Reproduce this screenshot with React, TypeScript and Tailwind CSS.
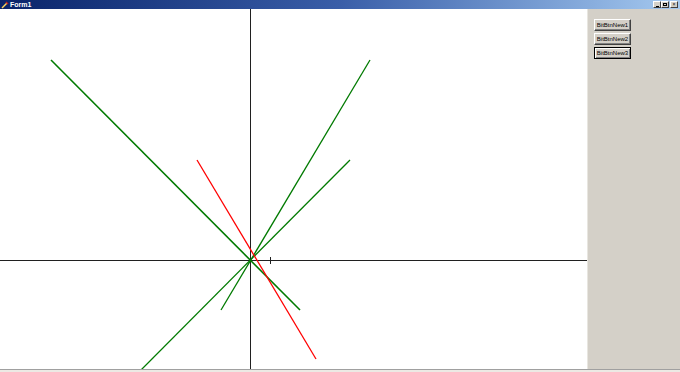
import React from "react";

function Btn({ label, def }: { label: string; def?: boolean }) {
  return (
    <div
      className={
        "w-[37px] h-[12px] flex items-center justify-center bg-[#d4d0c8] text-[6px] leading-none text-black " +
        (def
          ? "border border-black shadow-[inset_1px_1px_0_#fff,inset_-1px_-1px_0_#808080]"
          : "border-t border-l border-t-white border-l-white border-r border-b border-r-[#404040] border-b-[#404040] shadow-[inset_-1px_-1px_0_#808080]")
      }
      style={{ fontFamily: '"Liberation Sans", Arial, sans-serif' }}
    >
      {label}
    </div>
  );
}

function CapBtn({ children }: { children: React.ReactNode }) {
  return (
    <div className="w-[8px] h-[7px] bg-[#d4d0c8] border-t border-l border-white border-r border-b border-r-[#404040] border-b-[#404040] flex items-center justify-center text-[5px] leading-none text-black">
      {children}
    </div>
  );
}

export default function App() {
  return (
    <div
      className="w-[680px] h-[372px] bg-white overflow-hidden flex flex-col"
      style={{ fontFamily: '"Liberation Sans", Arial, sans-serif' }}
    >
      <div className="h-[9px] flex items-center justify-between bg-gradient-to-r from-[#0a246a] via-[#3a5ea8] to-[#a6caf0] shrink-0">
        <div className="flex items-center gap-[1px] pl-[1px]">
          <svg width="8" height="8" viewBox="0 0 8 8">
            <path d="M1 7 L6 2" stroke="#ffd75a" strokeWidth="1.5" />
            <path d="M5 1 L7 3" stroke="#c02020" strokeWidth="1.5" />
          </svg>
          <span className="text-[7px] font-bold text-white leading-none">Form1</span>
        </div>
        <div className="flex gap-[0px] pr-[2px]">
          <CapBtn>
            <span className="block w-[3px] h-[1px] bg-black mt-[3px]" />
          </CapBtn>
          <CapBtn>
            <span className="block w-[4px] h-[3px] border border-black" />
          </CapBtn>
          <div className="ml-[1px]">
            <CapBtn>×</CapBtn>
          </div>
        </div>
      </div>
      <div className="flex h-[360px] shrink-0">
        <div className="w-[587px] h-full bg-white">
          <svg width="587" height="360" viewBox="0 9 587 360">
            <line x1="0" y1="260.5" x2="587" y2="260.5" stroke="#202020" strokeWidth="1" />
            <line x1="250.5" y1="9" x2="250.5" y2="369" stroke="#202020" strokeWidth="1" />
            <line x1="270.5" y1="257" x2="270.5" y2="264" stroke="#202020" strokeWidth="1" />
            <line x1="51" y1="60" x2="300" y2="310" stroke="#007a00" strokeWidth="1.6" />
            <line x1="370" y1="60" x2="221" y2="310" stroke="#007a00" strokeWidth="1.3" />
            <line x1="350" y1="160" x2="141" y2="370" stroke="#007a00" strokeWidth="1.3" />
            <line x1="197" y1="160" x2="316" y2="359" stroke="#ff0000" strokeWidth="1.3" />
          </svg>
        </div>
        <div className="flex-1 h-full bg-[#d4d0c8] border-l border-l-[#e8e6e0] flex flex-col gap-[2px] pl-[6px] pt-[10px]">
          <Btn label="BitBtnNew1" />
          <Btn label="BitBtnNew2" />
          <Btn label="BitBtnNew3" def />
        </div>
      </div>
      <div className="h-[3px] border-t border-t-[#a0a0a0] bg-[#ece9e4]" />
    </div>
  );
}
